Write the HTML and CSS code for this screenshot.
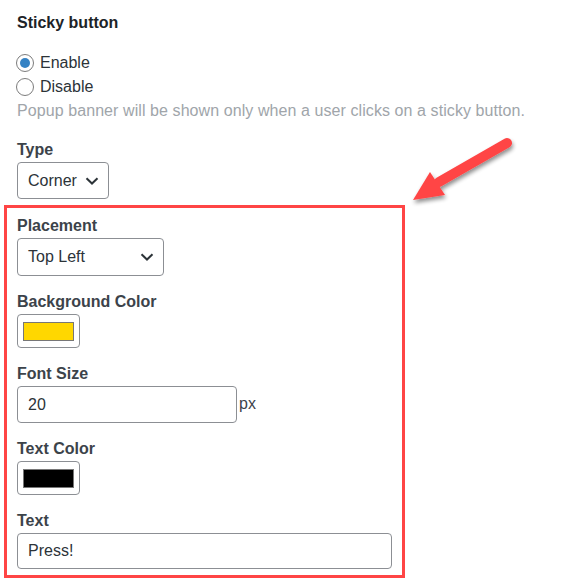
FILE: index.html
```html
<!DOCTYPE html>
<html>
<head>
<meta charset="utf-8">
<link rel="stylesheet" href="styles.css">
</head>
<body>
<div class="page">
  <div class="intro">
    <h3 class="title">Sticky button</h3>
    <div class="radios">
      <label class="radio"><input type="radio" name="sticky" checked><span>Enable</span></label>
      <label class="radio"><input type="radio" name="sticky"><span>Disable</span></label>
    </div>
    <p class="desc">Popup banner will be shown only when a user clicks on a sticky button.</p>
    <div class="field type-field">
      <label class="lbl">Type</label>
      <div class="select sel-type"><span>Corner</span><svg class="chev" viewBox="0 0 14 8" width="14" height="8"><path d="M1.5 1.2 L7 6.5 L12.5 1.2" fill="none" stroke="#2c3338" stroke-width="2"/></svg></div>
    </div>
  </div>
  <div class="box">
    <div class="field">
      <label class="lbl">Placement</label>
      <div class="select sel-place"><span>Top Left</span><svg class="chev" viewBox="0 0 14 8" width="14" height="8"><path d="M1.5 1.2 L7 6.5 L12.5 1.2" fill="none" stroke="#2c3338" stroke-width="2"/></svg></div>
    </div>
    <div class="field">
      <label class="lbl">Background Color</label>
      <div class="swatch"><span class="swatch-fill yellow"></span></div>
    </div>
    <div class="field">
      <label class="lbl">Font Size</label>
      <div class="row"><input class="input input-size" type="text" value="20"><span class="unit">px</span></div>
    </div>
    <div class="field">
      <label class="lbl">Text Color</label>
      <div class="swatch"><span class="swatch-fill black"></span></div>
    </div>
    <div class="field">
      <label class="lbl">Text</label>
      <input class="input input-text" type="text" value="Press!">
    </div>
  </div>
  <svg class="arrow" width="130" height="90" viewBox="0 0 130 90">
    <defs>
      <filter id="sh" x="-30%" y="-30%" width="160%" height="160%">
        <feGaussianBlur in="SourceAlpha" stdDeviation="2.2"/>
        <feOffset dx="1" dy="3" result="b"/>
        <feComponentTransfer><feFuncA type="linear" slope="0.45"/></feComponentTransfer>
        <feMerge><feMergeNode/><feMergeNode in="SourceGraphic"/></feMerge>
      </filter>
    </defs>
    <g filter="url(#sh)">
      <line x1="112" y1="8" x2="44" y2="47" stroke="#ff4545" stroke-width="10" stroke-linecap="round"/>
      <polygon points="18,65 35,37 50,60" fill="#ff4545"/>
    </g>
  </svg>
</div>
</body>
</html>
```
FILE: styles.css
```css
html, body {
  margin: 0;
  padding: 0;
  background: #ffffff;
}
body {
  font-family: "Liberation Sans", Arial, sans-serif;
  color: #2c3338;
}
.page {
  position: relative;
  width: 570px;
  height: 585px;
  padding: 13px 0 0 4px;
  box-sizing: border-box;
}
.intro {
  padding-left: 13px;
}
.title {
  margin: 0;
  font-size: 16px;
  line-height: 20px;
  font-weight: bold;
  color: #1d2327;
}
.radios {
  margin-top: 18px;
  display: flex;
  flex-direction: column;
}
.radio {
  display: flex;
  align-items: center;
  height: 24px;
  font-size: 16px;
  color: #2c3338;
}
.radio input {
  appearance: none;
  -webkit-appearance: none;
  width: 18px;
  height: 18px;
  margin: 0 6px 0 -1px;
  border: 1px solid #7c7c7c;
  border-radius: 50%;
  box-sizing: border-box;
  background: #fff;
  display: grid;
  place-items: center;
}
.radio input:checked::before {
  content: "";
  width: 10px;
  height: 10px;
  border-radius: 50%;
  background: #3582c4;
}
.desc {
  margin: 0;
  font-size: 16px;
  line-height: 24px;
  color: #a0a5aa;
  letter-spacing: 0.08px;
}
.type-field {
  margin-top: 17px;
  padding-bottom: 6px;
}
.field {
  display: flex;
  flex-direction: column;
  align-items: flex-start;
}
.lbl {
  display: block;
  font-size: 16px;
  line-height: 20px;
  font-weight: bold;
  color: #3c434a;
  margin-bottom: 2px;
}
.select {
  box-sizing: border-box;
  height: 37px;
  border: 1px solid #8c8f94;
  border-radius: 4px;
  display: flex;
  align-items: center;
  justify-content: space-between;
  padding: 0 9px 0 10px;
  font-size: 16px;
  color: #2c3338;
  background: #fff;
}
.sel-type { width: 92px; }
.sel-place { width: 147px; height: 38px; }
.chev { display: block; }
.box {
  width: 401px;
  height: 373px;
  box-sizing: border-box;
  border: 3px solid #ff4545;
  padding: 8px 10px 0 10px;
  display: flex;
  flex-direction: column;
  gap: 16px;
}
.swatch {
  box-sizing: border-box;
  width: 63px;
  height: 34px;
  border: 1px solid #8c8f94;
  border-radius: 4px;
  display: flex;
  align-items: center;
  justify-content: center;
  background: #fff;
}
.swatch-fill {
  display: block;
  width: 51px;
  height: 19px;
  box-sizing: border-box;
  border: 1px solid #777;
}
.yellow { background: #ffd700; }
.black { background: #000; }
.row {
  display: flex;
  align-items: center;
}
.input {
  box-sizing: border-box;
  height: 37px;
  border: 1px solid #8c8f94;
  border-radius: 4px;
  padding: 0 10px;
  font-family: "Liberation Sans", Arial, sans-serif;
  font-size: 16px;
  color: #2c3338;
  background: #fff;
  margin: 0;
  outline: none;
}
.input-size { width: 220px; }
.unit {
  font-size: 16px;
  line-height: 20px;
  color: #3c434a;
  margin-left: 2px;
  margin-top: -2px;
}
.input-text { width: 375px; height: 36px; }
.arrow {
  position: absolute;
  left: 395px;
  top: 135px;
}
```
